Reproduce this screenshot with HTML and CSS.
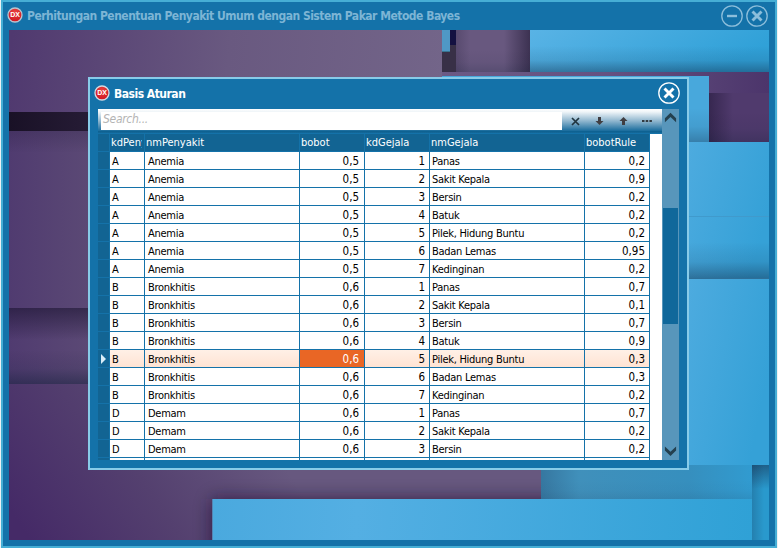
FILE: index.html
```
<!DOCTYPE html>
<html lang="id">
<head>
<meta charset="utf-8">
<title>Perhitungan Penentuan Penyakit Umum dengan Sistem Pakar Metode Bayes</title>
<link rel="stylesheet" href="styles.css">
</head>
<body>
<svg class="defs" width="0" height="0" aria-hidden="true">
<defs>
<radialGradient id="ball" cx=".5" cy=".3" r=".7"><stop offset="0" stop-color="#e8423f"/><stop offset="1" stop-color="#cf1420"/></radialGradient>
<symbol id="close" viewBox="0 0 22 22"><circle cx="11" cy="11" r="10.2" fill="none" stroke="currentColor" stroke-width="1.3"/><path d="M6.500 6.500l9 9M15.500 6.500l-9 9" stroke="currentColor" stroke-width="2.9" fill="none"/></symbol>
<symbol id="minimize" viewBox="0 0 22 22"><circle cx="11" cy="11" r="10.2" fill="none" stroke="currentColor" stroke-width="1.3"/><path d="M6 11h10" stroke="currentColor" stroke-width="2.4"/></symbol>
</defs>
</svg>
<div class="window">
  <header class="titlebar">
    <div class="logo"><svg viewBox="0 0 16 16"><circle cx="8" cy="8" r="7" fill="url(#ball)" stroke="#b9c4d0" stroke-width="1.3"/></svg><b>DX</b></div>
    <h1>Perhitungan Penentuan Penyakit Umum dengan Sistem Pakar Metode Bayes</h1>
    <svg class="btn"><use href="#minimize"/></svg>
    <svg class="btn"><use href="#close"/></svg>
  </header>
  <main class="desktop">
    <svg class="wallpaper" viewBox="9 30 760 510" shape-rendering="crispEdges" aria-hidden="true">
      <defs>
        <linearGradient id="p1" gradientUnits="userSpaceOnUse" x1="9" y1="70" x2="442" y2="110"><stop offset="0" stop-color="#50396f"/><stop offset=".5" stop-color="#695980"/><stop offset="1" stop-color="#736589"/></linearGradient>
        <linearGradient id="p2"><stop offset="0" stop-color="#503b70"/><stop offset="1" stop-color="#5b4975"/></linearGradient>
        <linearGradient id="p3" gradientUnits="userSpaceOnUse" x1="30" y1="540" x2="240" y2="400"><stop offset="0" stop-color="#452a67"/><stop offset=".5" stop-color="#54406f"/><stop offset="1" stop-color="#67587f"/></linearGradient>
        <linearGradient id="p4"><stop offset="0" stop-color="#6b5a85"/><stop offset=".5" stop-color="#655281"/><stop offset="1" stop-color="#4c356b"/></linearGradient>
        <linearGradient id="night"><stop offset="0" stop-color="#191126"/><stop offset="1" stop-color="#291e39"/></linearGradient>
        <linearGradient id="b1" x2="1" y2=".3"><stop offset="0" stop-color="#59b3e5"/><stop offset="1" stop-color="#30a1d8"/></linearGradient>
        <linearGradient id="b2" x2="1" y2=".5"><stop offset="0" stop-color="#4dabdf"/><stop offset="1" stop-color="#35a1d7"/></linearGradient>
        <linearGradient id="b3" gradientUnits="userSpaceOnUse" x1="212" y1="500" x2="752" y2="535"><stop offset="0" stop-color="#4aa9de"/><stop offset=".27" stop-color="#54afe3"/><stop offset="1" stop-color="#2fa1d6"/></linearGradient>
        <linearGradient id="b4"><stop offset="0" stop-color="#3677a0"/><stop offset=".18" stop-color="#4090bb"/><stop offset=".7" stop-color="#368fbe"/><stop offset="1" stop-color="#319bd0"/></linearGradient>
        <linearGradient id="down" x2="0" y2="1"><stop offset="0" stop-color="#0d0c25" stop-opacity="0"/><stop offset=".55" stop-color="#0d1c35" stop-opacity=".12"/><stop offset="1" stop-color="#0d1c35" stop-opacity=".45"/></linearGradient>
        <linearGradient id="up" x2="0" y2="1"><stop offset="0" stop-color="#100b24" stop-opacity=".5"/><stop offset="1" stop-color="#100b24" stop-opacity="0"/></linearGradient>
        <linearGradient id="right"><stop offset="0" stop-color="#100b24" stop-opacity="0"/><stop offset="1" stop-color="#100b24" stop-opacity=".5"/></linearGradient>
        <linearGradient id="left"><stop offset="0" stop-color="#100b24" stop-opacity=".4"/><stop offset="1" stop-color="#100b24" stop-opacity="0"/></linearGradient>
        <filter id="soft" filterUnits="userSpaceOnUse" x="150" y="440" width="640" height="160"><feGaussianBlur stdDeviation="9"/></filter>
        <clipPath id="floor"><rect x="9" y="384" width="532" height="156"/></clipPath>
      </defs>
      <rect x="9" y="30" width="433" height="82" fill="url(#p1)"/>
      <rect x="9" y="112" width="100" height="19" fill="url(#night)"/>
      <rect x="9" y="131" width="80" height="177" fill="url(#p2)"/>
      <rect x="9" y="131" width="80" height="22" fill="url(#up)" opacity=".35"/>
      <rect x="9" y="308" width="80" height="76" fill="url(#p2)"/>
      <rect x="9" y="308" width="80" height="32" fill="url(#up)"/>
      <rect x="9" y="350" width="80" height="34" fill="url(#down)"/>
      <rect x="9" y="384" width="532" height="156" fill="url(#p3)"/>
      <g clip-path="url(#floor)"><rect x="212" y="499" width="540" height="80" fill="#180e28" opacity=".65" filter="url(#soft)"/></g>
      <rect x="442" y="30" width="14" height="42" fill="#383047"/>
      <rect x="450" y="30" width="6" height="15" fill="#141141"/>
      <rect x="442" y="30" width="8" height="22" fill="#4f98c5"/>
      <rect x="442" y="51" width="8" height="1" fill="#397490"/>
      <rect x="456" y="30" width="74" height="42" fill="#68587f"/>
      <rect x="456" y="30" width="14" height="42" fill="url(#left)" opacity=".45"/>
      <rect x="504" y="30" width="26" height="42" fill="url(#right)"/>
      <rect x="456" y="50" width="74" height="22" fill="url(#down)" opacity=".4"/>
      <rect x="530" y="30" width="239" height="42" fill="url(#b1)"/>
      <rect x="530" y="46" width="239" height="26" fill="url(#down)" opacity=".85"/>
      <rect x="442" y="72" width="327" height="70" fill="url(#p4)"/>
      <rect x="709" y="93" width="60" height="49" fill="#503a6d"/>
      <rect x="709" y="93" width="24" height="49" fill="url(#left)"/>
      <rect x="709" y="112" width="60" height="30" fill="url(#down)" opacity=".5"/>
      <rect x="442" y="76" width="267" height="66" fill="#48a8dc"/>
      <rect x="689" y="108" width="20" height="34" fill="url(#down)" opacity=".65"/>
      <rect x="689" y="142" width="80" height="137" fill="url(#b2)"/>
      <rect x="689" y="216" width="80" height="1" fill="#409acc"/>
      <rect x="689" y="242" width="80" height="36" fill="url(#down)" opacity=".85"/>
      <rect x="689" y="278" width="80" height="1" fill="#2e6f98"/>
      <rect x="689" y="279" width="80" height="186" fill="url(#b2)"/>
      <rect x="541" y="465" width="211" height="34" fill="url(#b4)"/>
      <rect x="541" y="480" width="211" height="19" fill="url(#down)" opacity=".2"/>
      <rect x="752" y="465" width="17" height="75" fill="#2999cd"/>
      <rect x="752" y="465" width="17" height="24" fill="url(#up)" opacity=".8"/>
      <rect x="752" y="465" width="12" height="75" fill="url(#left)" opacity=".45"/>
      <rect x="212" y="499" width="540" height="41" fill="url(#b3)"/>
      <rect x="212" y="499" width="1" height="41" fill="#5485b4"/>
    </svg>
    <section class="dialog">
      <header class="dialog-title">
        <div class="logo"><svg viewBox="0 0 16 16"><circle cx="8" cy="8" r="7" fill="url(#ball)" stroke="#d5dae2" stroke-width="1.3"/></svg><b>DX</b></div>
        <h2>Basis Aturan</h2>
        <svg class="btn"><use href="#close"/></svg>
      </header>
      <div class="body">
        <div class="pane">
          <div class="search">
            <div class="field">Search...</div>
            <svg class="tools" viewBox="0 0 98 18">
              <path d="M10 6l7 7M17 6l-7 7" stroke="#20343f" stroke-width="1.7"/>
              <path d="M36 5h3v4h2.500l-4 4-4-4h2.500z" fill="#403e42"/>
              <path d="M60 13h3v-4h2.500l-4-4-4 4h2.500z" fill="#403e42"/>
              <path d="M80 8h2.500v2h-2.500zM83.700 8h2.500v2h-2.500zM87.400 8h2.500v2h-2.500z" fill="#333b42"/>
            </svg>
          </div>
          <div class="gridwrap">
          <table>
            <colgroup><col class="c0"><col class="c1"><col class="c2"><col class="c3"><col class="c4"><col class="c5"><col class="c6"></colgroup>
            <thead><tr><th></th><th><span class="clip">kdPeny</span></th><th>nmPenyakit</th><th>bobot</th><th>kdGejala</th><th>nmGejala</th><th>bobotRule</th></tr></thead>
            <tbody>
            <tr><td></td><td>A</td><td>Anemia</td><td>0,5</td><td>1</td><td>Panas</td><td>0,2</td></tr>
            <tr><td></td><td>A</td><td>Anemia</td><td>0,5</td><td>2</td><td>Sakit Kepala</td><td>0,9</td></tr>
            <tr><td></td><td>A</td><td>Anemia</td><td>0,5</td><td>3</td><td>Bersin</td><td>0,2</td></tr>
            <tr><td></td><td>A</td><td>Anemia</td><td>0,5</td><td>4</td><td>Batuk</td><td>0,2</td></tr>
            <tr><td></td><td>A</td><td>Anemia</td><td>0,5</td><td>5</td><td>Pilek, Hidung Buntu</td><td>0,2</td></tr>
            <tr><td></td><td>A</td><td>Anemia</td><td>0,5</td><td>6</td><td>Badan Lemas</td><td>0,95</td></tr>
            <tr><td></td><td>A</td><td>Anemia</td><td>0,5</td><td>7</td><td>Kedinginan</td><td>0,2</td></tr>
            <tr><td></td><td>B</td><td>Bronkhitis</td><td>0,6</td><td>1</td><td>Panas</td><td>0,7</td></tr>
            <tr><td></td><td>B</td><td>Bronkhitis</td><td>0,6</td><td>2</td><td>Sakit Kepala</td><td>0,1</td></tr>
            <tr><td></td><td>B</td><td>Bronkhitis</td><td>0,6</td><td>3</td><td>Bersin</td><td>0,7</td></tr>
            <tr><td></td><td>B</td><td>Bronkhitis</td><td>0,6</td><td>4</td><td>Batuk</td><td>0,9</td></tr>
            <tr class="current"><td><i class="pointer"></i></td><td>B</td><td>Bronkhitis</td><td class="focused">0,6</td><td>5</td><td>Pilek, Hidung Buntu</td><td>0,3</td></tr>
            <tr><td></td><td>B</td><td>Bronkhitis</td><td>0,6</td><td>6</td><td>Badan Lemas</td><td>0,3</td></tr>
            <tr><td></td><td>B</td><td>Bronkhitis</td><td>0,6</td><td>7</td><td>Kedinginan</td><td>0,2</td></tr>
            <tr><td></td><td>D</td><td>Demam</td><td>0,6</td><td>1</td><td>Panas</td><td>0,7</td></tr>
            <tr><td></td><td>D</td><td>Demam</td><td>0,6</td><td>2</td><td>Sakit Kepala</td><td>0,2</td></tr>
            <tr><td></td><td>D</td><td>Demam</td><td>0,6</td><td>3</td><td>Bersin</td><td>0,2</td></tr>
            <tr class="stub"><td></td><td></td><td></td><td></td><td></td><td></td><td></td></tr>
            </tbody>
          </table>
          </div>
        </div>
        <div class="scrollbar">
          <svg viewBox="0 0 17 17"><path d="M8.500 2.700l5.600 5.600v4l-5.600-5.400-5.600 5.400v-4z" fill="#24404f"/></svg>
          <div class="thumb"></div>
          <svg viewBox="0 0 17 17"><path d="M8.500 14l5.600-5.600v-4l-5.600 5.400-5.600-5.400v4z" fill="#24404f"/></svg>
        </div>
      </div>
    </section>
  </main>
</div>
</body>
</html>
```
FILE: styles.css
```
* { box-sizing: border-box; }
body { margin: 0; width: 778px; height: 548px; overflow: hidden; background: #eef1f3; font: 11px "DejaVu Sans Condensed", "DejaVu Sans", sans-serif; font-stretch: condensed; letter-spacing: -.27px; }
svg { display: block; flex: none; }
.defs { position: absolute; }
h1, h2 { margin: 0; font-weight: bold; white-space: nowrap; letter-spacing: -.5px; }
.window { width: 776px; height: 548px; margin-left: 1px; border: 2px solid #46aed5; background: #1472a9; padding: 0 6px 6px; }
.titlebar { height: 28px; display: flex; align-items: center; padding-right: 1px; }
.logo { display: grid; width: 16px; height: 16px; place-items: center; flex: none; margin-left: -2px; }
.titlebar .logo { margin-top: -2px; }
.logo > * { grid-area: 1 / 1; }
.logo svg { width: 16px; height: 16px; }
.logo b { color: #fff; font: bold 7px/8px "Liberation Sans", sans-serif; letter-spacing: -.2px; }
h1 { flex: 1; font-size: 12px; line-height: 28px; color: #7db5d5; margin-left: 4px; }
.btn { width: 22px; height: 22px; color: #8cbedb; margin-left: 3px; }
.desktop { position: relative; height: 510px; }
.wallpaper { width: 760px; height: 510px; }
.dialog { position: absolute; left: 79px; top: 47px; width: 601px; height: 393px; border: 2px solid #88cbe8; background: #1472a9; padding: 0 8px; }
.dialog-title { height: 30px; display: flex; align-items: center; }
.dialog-title .logo { margin-left: -4px; margin-top: -3px; }
.dialog-title .btn { color: #fff; margin: -2px -1px 0 0; }
h2 { flex: 1; font-size: 12px; line-height: 28px; color: #fff; margin-left: 4px; }
.body { display: flex; height: 351px; }
.pane { width: 564px; height: 351px; background: #fff; }
.search { height: 25px; display: flex; padding: 3px 1px 4px 3px; background: linear-gradient(#fff 0, #eef4f8 12%, #8fb6ce 48%, #1e6f9f 86%, #0c608f 88%, #15699a 96%, #1472a9 97%); }
.field { width: 461px; height: 18px; background: #fff; color: #b4b4b4; font-style: italic; font-size: 12px; line-height: 15px; padding-left: 2px; letter-spacing: -.3px; }
.tools { width: 98px; height: 18px; }
.gridwrap { height: 326px; overflow: hidden; }
table { width: 552px; border-collapse: separate; border-spacing: 0; table-layout: fixed; }
.c0 { width: 12px; } .c1 { width: 35px; } .c2 { width: 155px; } .c3, .c4 { width: 65px; } .c5 { width: 155px; } .c6 { width: 65px; }
th, td { height: 18px; padding: 0 4px 0 2px; border-right: 1px solid #1472a9; border-bottom: 1px solid #1472a9; text-align: left; font-weight: normal; line-height: 17px; white-space: nowrap; overflow: hidden; color: #000; }
th { background: #126493; color: #fff; padding: 0 1px; letter-spacing: 0; }
td { padding-top: 2px; line-height: 15px; }
.clip { display: block; width: 31px; overflow: hidden; }
td:first-child { background: #126493; padding: 0; }
td:nth-child(3) { padding-left: 3px; }
td:nth-child(4), td:nth-child(5), td:nth-child(7) { text-align: right; letter-spacing: 0; font-size: 11.5px; }
td:nth-child(4) { padding-right: 5px; }
.current td { background: linear-gradient(#fff0e6, #ffe3d3); }
.current td:first-child { background: #126493; }
.current .focused { background: #e96625; color: #fff; }
.stub td { height: 2px; border-bottom: 0; line-height: 0; padding: 0; }
.pointer { display: block; margin-left: 3px; width: 0; height: 0; border-left: 5px solid #d9edf8; border-top: 5px solid transparent; border-bottom: 5px solid transparent; }
.scrollbar { width: 17px; height: 351px; background: #5896bb; display: flex; flex-direction: column; padding: 1px; }
.scrollbar svg { width: 17px; height: 17px; margin-left: -1px; }
.thumb { height: 116px; background: #10689b; margin: 81px 0 auto; }
```
